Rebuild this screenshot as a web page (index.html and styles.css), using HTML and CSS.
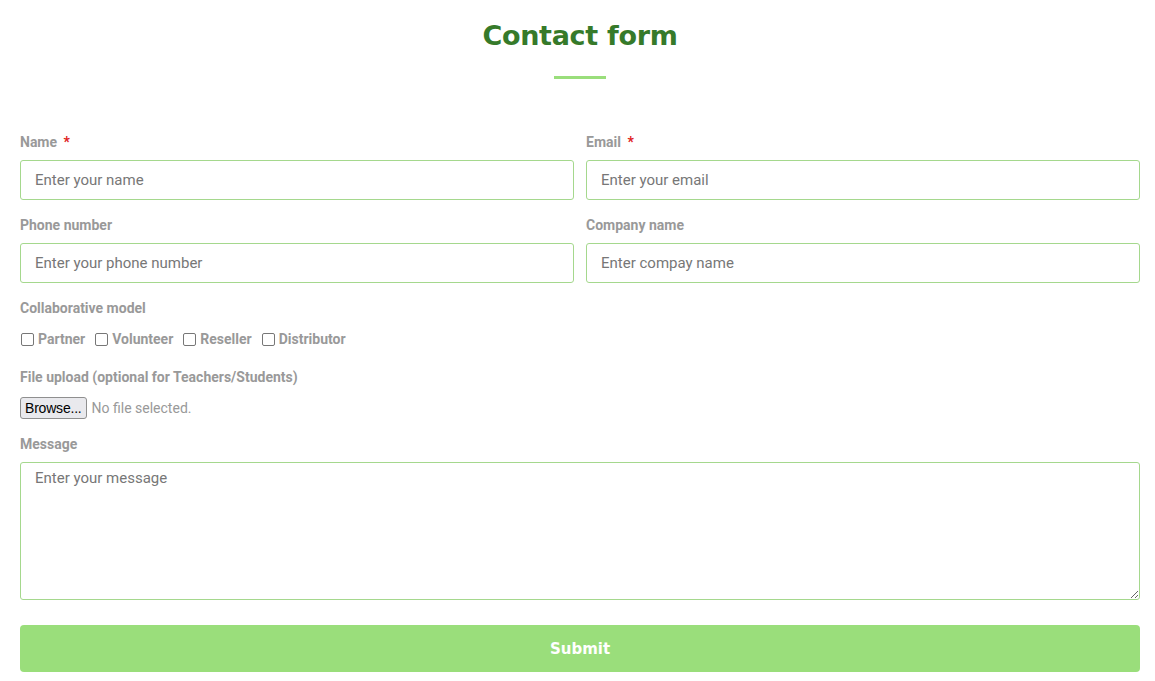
FILE: index.html
```html
<!DOCTYPE html>
<html lang="en">

<head>
    <meta charset="UTF-8">
    <meta name="viewport" content="width=device-width, initial-scale=1.0">
    <title>Contact form</title>
    <link rel="stylesheet" href="styles.css">
</head>

<body>
    <div class="contact">
        <h1>Contact form</h1>
        <div class="divider"></div>
        <form class="contact-form">
            <div class="row">
                <div class="field">
                    <label for="name">Name <span class="req">*</span></label>
                    <input type="text" id="name" placeholder="Enter your name">
                </div>
                <div class="field">
                    <label for="email">Email <span class="req">*</span></label>
                    <input type="email" id="email" placeholder="Enter your email">
                </div>
            </div>
            <div class="row">
                <div class="field">
                    <label for="phone">Phone number</label>
                    <input type="text" id="phone" placeholder="Enter your phone number">
                </div>
                <div class="field">
                    <label for="company">Company name</label>
                    <input type="text" id="company" placeholder="Enter compay name">
                </div>
            </div>
            <div class="field">
                <label>Collaborative model</label>
                <div class="checks">
                    <label class="check"><span class="box"></span>Partner</label>
                    <label class="check"><span class="box"></span>Volunteer</label>
                    <label class="check"><span class="box"></span>Reseller</label>
                    <label class="check"><span class="box"></span>Distributor</label>
                </div>
            </div>
            <div class="field">
                <label>File upload (optional for Teachers/Students)</label>
                <div class="file">
                    <button type="button" class="browse">Browse...</button>
                    <span class="no-file">No file selected.</span>
                </div>
            </div>
            <div class="field">
                <label for="message">Message</label>
                <textarea id="message" placeholder="Enter your message"></textarea>
            </div>
            <button type="submit" class="submit">Submit</button>
        </form>
    </div>
</body>

</html>
```

FILE: styles.css
```css
body {
    font-family: Roboto, "Liberation Sans", sans-serif;
    background-color: #fff;
    margin: 0;
    padding: 0;
}

.contact {
    padding: 0 15px 0 20px;
}

h1 {
    text-align: center;
    font-family: "DejaVu Sans", sans-serif;
    font-size: 27px;
    line-height: 36px;
    font-weight: 700;
    letter-spacing: -0.3px;
    color: #367a2a;
    margin: 18px 0 0;
}

.divider {
    width: 52px;
    height: 3px;
    background-color: #9ade7b;
    margin: 22px auto 53px;
}

.row {
    display: grid;
    grid-template-columns: 1fr 1fr;
    gap: 12px;
}

.field {
    margin-bottom: 15px;
}

.field > label {
    display: block;
    font-size: 14px;
    line-height: 20px;
    font-weight: 700;
    color: #999;
    margin-bottom: 8px;
}

.req {
    color: #e02020;
    margin-left: 3px;
}

input,
textarea {
    display: block;
    width: 100%;
    box-sizing: border-box;
    border: 1px solid #a5d88d;
    border-radius: 3px;
    font-family: Roboto, "Liberation Sans", sans-serif;
    font-size: 15px;
    color: #555;
    outline: none;
}

input {
    height: 40px;
    padding: 0 14px;
}

textarea {
    height: 138px;
    padding: 6px 14px;
    resize: vertical;
}

input::placeholder,
textarea::placeholder {
    color: #777;
}

.checks {
    display: flex;
    gap: 9px;
    margin-top: 11px;
    margin-bottom: 18px;
}

.check {
    display: flex;
    align-items: center;
    font-size: 14px;
    line-height: 20px;
    font-weight: 700;
    color: #999;
}

.box {
    width: 11px;
    height: 11px;
    border: 1px solid #777;
    border-radius: 2px;
    margin: 0 4px 0 1px;
}

.file {
    display: flex;
    align-items: center;
    gap: 5px;
    margin-top: 10px;
    margin-bottom: 14px;
}

.browse {
    height: 22px;
    padding: 0 4px;
    border: 1px solid #8f8f8f;
    border-radius: 3px;
    background-color: #e9e9ed;
    font-family: "Liberation Sans", sans-serif;
    font-size: 14px;
    line-height: 20px;
    letter-spacing: -0.2px;
    color: #000;
}

.no-file {
    font-size: 14px;
    color: #999;
}

.submit {
    display: block;
    width: 100%;
    height: 47px;
    margin-top: 25px;
    border: none;
    border-radius: 4px;
    background-color: #9ade7b;
    color: #fff;
    font-family: "DejaVu Sans", sans-serif;
    font-size: 15px;
    font-weight: 700;
    cursor: pointer;
}
```
